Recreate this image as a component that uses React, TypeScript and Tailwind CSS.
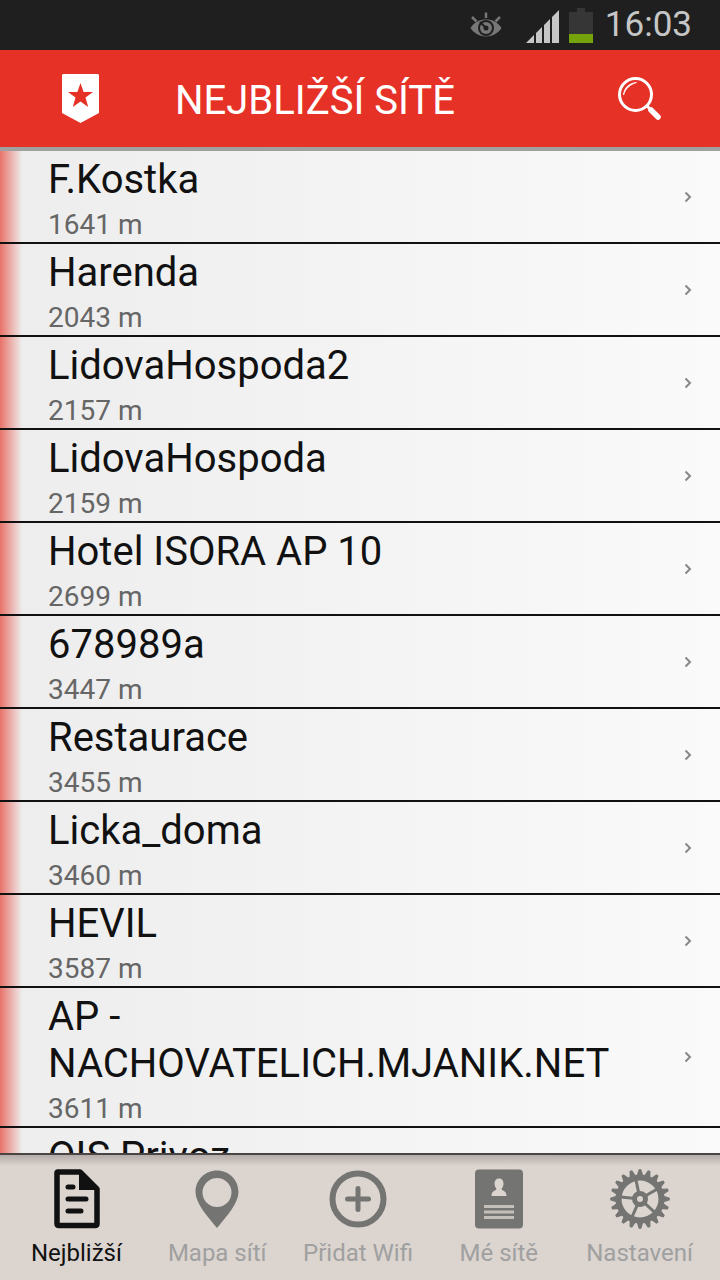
import type { ReactNode } from 'react';

interface Network {
  name: string;
  distance: number;
}

interface Tab {
  label: string;
  href: string;
  icon: ReactNode;
}

const networks: Network[] = [
  { name: 'F.Kostka', distance: 1641 },
  { name: 'Harenda', distance: 2043 },
  { name: 'LidovaHospoda2', distance: 2157 },
  { name: 'LidovaHospoda', distance: 2159 },
  { name: 'Hotel ISORA AP 10', distance: 2699 },
  { name: '678989a', distance: 3447 },
  { name: 'Restaurace', distance: 3455 },
  { name: 'Licka_doma', distance: 3460 },
  { name: 'HEVIL', distance: 3587 },
  { name: 'AP - NACHOVATELICH.MJANIK.NET', distance: 3611 },
  { name: 'OIS Privoz', distance: 3640 },
];

const point = (radius: number, degrees: number) => {
  const rad = (degrees * Math.PI) / 180;
  return `${(30 + radius * Math.cos(rad)).toFixed(2)} ${(30 - radius * Math.sin(rad)).toFixed(2)}`;
};

const gearTeeth = Array.from({ length: 20 }, (_, i) => {
  const a = 90 + i * 18;
  return [point(24.5, a - 7), point(29.8, a - 2.5), point(29.8, a + 2.5), point(24.5, a + 7)].join(' L');
}).join(' L');

function DocumentIcon() {
  return (
    <svg viewBox="0 0 60 60" className="size-[60px]" fill="none" stroke="currentColor" aria-hidden="true">
      <path d="M11.5 3H34L51 20V54.5Q51 56.5 49 56.5H13Q11 56.5 11 54.5V3.5Z" strokeWidth="5.5" strokeLinejoin="round" />
      <path d="M34 3L51 20H34Z" fill="currentColor" strokeWidth="2" />
      <path d="M22 18H27M22 30H40M22 42H35" strokeWidth="5" strokeLinecap="round" />
    </svg>
  );
}

function PinIcon() {
  return (
    <svg viewBox="0 0 60 60" className="size-[60px]" fill="currentColor" aria-hidden="true">
      <path
        fillRule="evenodd"
        d="M30 1.5C18 1.5 8.5 11 8.5 23C8.5 34 20 47 30 59C40 47 51.5 34 51.5 23C51.5 11 42 1.5 30 1.5ZM30 9A14.5 14.5 0 1 1 30 38A14.5 14.5 0 1 1 30 9Z"
      />
    </svg>
  );
}

function PlusIcon() {
  return (
    <svg viewBox="0 0 60 60" className="size-[60px]" fill="none" stroke="currentColor" aria-hidden="true">
      <circle cx="30" cy="30" r="25.5" strokeWidth="6" />
      <path d="M30 19.5V40.5M19.5 30H40.5" strokeWidth="5" strokeLinecap="round" />
    </svg>
  );
}

function ContactIcon() {
  return (
    <svg viewBox="0 0 60 60" className="size-[60px]" aria-hidden="true">
      <rect x="6" y="0.5" width="48" height="59" rx="4" fill="currentColor" />
      <path
        d="M30 9.5C27 9.5 25.5 11.5 25.5 14.5C25.5 17 26.5 18.5 27.5 20C26.5 22 22.5 21.5 22.5 27H37.5C37.5 21.5 33.5 22 32.5 20C33.5 18.5 34.5 17 34.5 14.5C34.5 11.5 33 9.5 30 9.5Z"
        fill="#dbd4cf"
      />
      <path d="M15 37.5H45M15 43H45M15 48.5H45" stroke="#c5bfba" strokeWidth="3" />
    </svg>
  );
}

function GearIcon() {
  return (
    <svg viewBox="0 0 60 60" className="size-[60px]" fill="none" stroke="currentColor" aria-hidden="true">
      <path
        fill="currentColor"
        stroke="none"
        fillRule="evenodd"
        d={`M${gearTeeth} Z M30 11.5A18.5 18.5 0 1 0 30 48.5A18.5 18.5 0 1 0 30 11.5Z`}
      />
      <circle cx="30" cy="30" r="5.5" strokeWidth="5" />
      {[30, 102, 174, 246, 318].map((a) => (
        <path key={a} d={`M${point(7, a)} L${point(19.5, a)}`} strokeWidth="3" />
      ))}
    </svg>
  );
}

const tabs: Tab[] = [
  { label: 'Nejbližší', href: '#nejblizsi', icon: <DocumentIcon /> },
  { label: 'Mapa sítí', href: '#mapa', icon: <PinIcon /> },
  { label: 'Přidat Wifi', href: '#pridat', icon: <PlusIcon /> },
  { label: 'Mé sítě', href: '#moje', icon: <ContactIcon /> },
  { label: 'Nastavení', href: '#nastaveni', icon: <GearIcon /> },
];

function StatusBar() {
  return (
    <div className="flex h-[50px] shrink-0 items-center justify-end bg-[#1f1f1f] pr-7 text-[#c6c6c6]">
      <svg viewBox="0 0 32 26" className="mr-6 h-[26px] w-8" fill="none" aria-hidden="true">
        <path
          d="M0.5 16C4 10 10 7.5 16 7.5S28 10 31.5 16C28 21.5 22 24.5 16 24.5S4 21.5 0.5 16Z"
          fill="#777"
        />
        <circle cx="16" cy="16" r="8" fill="#1f1f1f" />
        <circle cx="16" cy="16" r="6" fill="#777" />
        <circle cx="16" cy="16" r="2.5" fill="#1f1f1f" />
        <path d="M16 16L10 10" stroke="#1f1f1f" strokeWidth="2" />
        <path d="M16 0.5V6M2 5L6.5 9.5M30 5L25.5 9.5" stroke="#777" strokeWidth="2.5" />
      </svg>
      <svg viewBox="0 0 33 36" className="mr-2.5 h-9 w-[33px]" fill="currentColor" aria-hidden="true">
        <path d="M0 36L8 28V36ZM10 36V26L16 20V36ZM18 36V18L24 12V36ZM26 36V10L33 3V36Z" />
      </svg>
      <svg viewBox="0 0 24 36" className="mr-3 h-9 w-6" aria-hidden="true">
        <path d="M0 5H8V1H16V5H24V36H0Z" fill="#363636" />
        <path d="M0 27H24V36H0Z" fill="#74a30c" />
      </svg>
      <time className="text-[35px] leading-[48px]">16:03</time>
    </div>
  );
}

function Header() {
  return (
    <header className="flex shrink-0 items-center border-b-4 border-[#a0a0a0] bg-[#e63127] py-6 text-white">
      <a href="#oblibene" aria-label="Oblíbené" className="ml-[62px] block">
        <svg viewBox="0 0 37 49" className="h-[49px] w-[37px]" aria-hidden="true">
          <path d="M1 0H36L37 1V39L18.5 49L0 39V1Z" fill="currentColor" />
          <path
            d="M18.5 9L21.6 18H31L23.5 23.6L26.2 33L18.5 27.5L10.8 33L13.5 23.6L6 18H15.4Z"
            fill="#e63127"
          />
        </svg>
      </a>
      <h1 className="ml-[76px] flex-1 pt-1 text-[40px] leading-[45px]">NEJBLIŽŠÍ SÍTĚ</h1>
      <button type="button" aria-label="Hledat" className="mr-[58px]">
        <svg viewBox="0 0 44 44" className="size-11" fill="none" stroke="currentColor" aria-hidden="true">
          <circle cx="17.5" cy="17.5" r="16" strokeWidth="3" />
          <path d="M5.5 18C6 11 11 6 18.500 5.5C12 7.5 7.5 11.5 5.5 18Z" fill="currentColor" strokeWidth="0.8" />
          <path d="M28.5 28.5L32 32" strokeWidth="3" />
          <path d="M33 33L40 40" strokeWidth="5.5" strokeLinecap="round" />
        </svg>
      </button>
    </header>
  );
}

function NetworkRow({ name, distance }: Network) {
  return (
    <li className="border-b-2 border-[#111]">
      <a href="#sit" className="flex items-center pr-7 pl-12">
        <div className="min-w-0 flex-1 pt-[5px] pr-5">
          <h2 className="text-[40px] leading-[47px] text-[#111]">{name}</h2>
          <p className="mt-[5px] text-[28px] leading-[34px] text-[#666]">{distance} m</p>
        </div>
        <svg viewBox="0 0 8 12" className="h-3 w-2" fill="none" stroke="#888" strokeWidth="2" aria-hidden="true">
          <path d="M1.5 1.5L6 6L1.5 10.5" />
        </svg>
      </a>
    </li>
  );
}

export default function App() {
  return (
    <div className="flex h-screen flex-col font-[Roboto,sans-serif]">
      <StatusBar />
      <Header />
      <main className="min-h-0 flex-1 overflow-y-auto bg-linear-to-r from-[#ededed] to-[#fafafa] [scrollbar-width:none]">
        <ul className="bg-linear-to-r from-[#e87369] to-transparent bg-[length:22px_100%] bg-no-repeat">
          {networks.map((network) => (
            <NetworkRow key={network.name} {...network} />
          ))}
        </ul>
      </main>
      <nav className="shrink-0 border-t-2 border-[#4a4542] bg-[#dbd4cf] bg-linear-to-b from-[#b3aca8] to-[#dbd4cf] bg-[length:100%_11px] bg-no-repeat pt-3.5 pr-2.5 pb-3 pl-1.5">
        <ul className="grid grid-cols-5">
          {tabs.map((tab, i) => (
            <li key={tab.href}>
              <a
                href={tab.href}
                aria-current={i === 0 ? 'page' : undefined}
                className={`flex flex-col items-center gap-2.5 ${i === 0 ? 'text-[#111]' : 'text-[#747472]'}`}
              >
                {tab.icon}
                <span
                  className={`text-[24px] leading-[29px] whitespace-nowrap ${i === 0 ? 'text-[#111]' : 'text-[#a0a0a0]'}`}
                >
                  {tab.label}
                </span>
              </a>
            </li>
          ))}
        </ul>
      </nav>
    </div>
  );
}
